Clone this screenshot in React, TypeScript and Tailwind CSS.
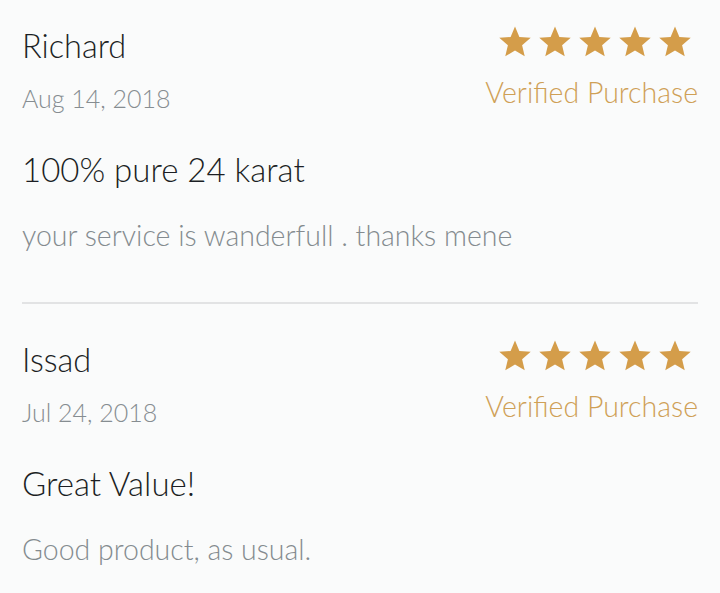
import React from "react";

const reviews = [
  {
    name: "Richard",
    date: "Aug 14, 2018",
    title: "100% pure 24 karat",
    body: "your service is wanderfull . thanks mene",
  },
  {
    name: "Issad",
    date: "Jul 24, 2018",
    title: "Great Value!",
    body: "Good product, as usual.",
  },
];

function Star() {
  return (
    <svg viewBox="0 0 24 23" className="w-[32px] h-[31px]" fill="#d49d4a">
      <path d="M12 0.2L15.29 8.07L23.79 8.77L17.33 14.33L19.29 22.63L12 18.2L4.71 22.63L6.67 14.33L0.21 8.77L8.71 8.07Z" />
    </svg>
  );
}

export default function App() {
  return (
    <div
      className="min-h-screen w-[720px] bg-[#fafbfb] px-[22px] font-light"
      style={{ fontFamily: "Lato, 'Noto Sans', sans-serif" }}
    >
      {reviews.map((r, i) => (
        <div key={r.name} className={i === 0 ? "pt-[25px]" : "pt-[35px]"}>
          <div className="flex justify-between">
            <div>
              <div className="pt-[1px] text-[32.5px] leading-[40px] text-[#1c1f24]">{r.name}</div>
              <div className="mt-[14px] text-[25px] leading-[36px] text-[#868d91]">{r.date}</div>
            </div>
            <div className="flex flex-col items-end pt-[1px]">
              <div className="flex gap-[8px] pr-[7px]">
                {[0, 1, 2, 3, 4].map((s) => (
                  <Star key={s} />
                ))}
              </div>
              <div className="mt-[17px] text-[28.5px] leading-[36px] text-[#cfa056]">Verified Purchase</div>
            </div>
          </div>
          <div className="mt-[33px] text-[33px] leading-[40px] text-[#1c1f24]">{r.title}</div>
          <div className="mt-[28px] text-[28.5px] leading-[36px] text-[#848b8f]">{r.body}</div>
          {i === 0 && <div className="mt-[49px] h-[2px] bg-[#e2e3e4]" />}
        </div>
      ))}
    </div>
  );
}
